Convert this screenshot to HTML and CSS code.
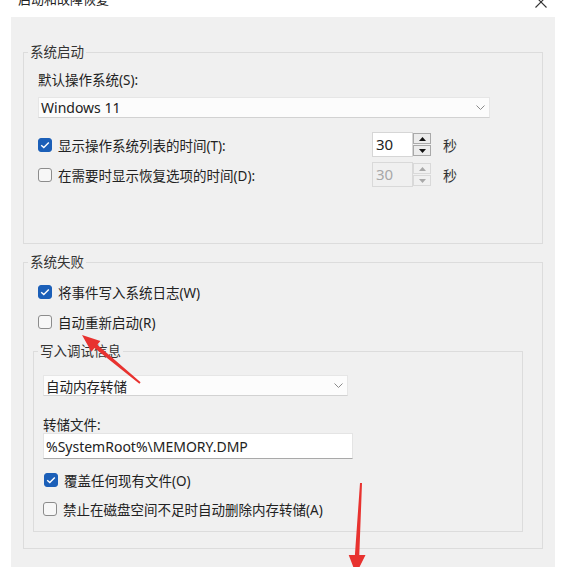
FILE: index.html
```html
<!DOCTYPE html>
<html lang="zh-CN">
<head>
<meta charset="utf-8">
<title>启动和故障恢复</title>
<link rel="stylesheet" href="styles.css">
</head>
<body>
<div class="page">
  <div class="titlebar">
    <span class="title">启动和故障恢复</span>
    <svg class="close" width="12" height="12" viewBox="0 0 12 12"><path d="M0.5 0.5 L11.5 11.5 M11.5 0.5 L0.5 11.5" stroke="#333" stroke-width="1.1" fill="none"/></svg>
  </div>
  <div class="panel">
    <fieldset class="group g1">
      <legend>系统启动</legend>
      <div class="label">默认操作系统(S):</div>
      <div class="select wide">
        <span class="latin">Windows 11</span>
        <svg class="chev" width="9" height="5" viewBox="0 0 9 5"><path d="M0.5 0.5 L4.5 4.5 L8.5 0.5" stroke="#8a8a8a" stroke-width="1" fill="none"/></svg>
      </div>
      <div class="timerow first">
        <div class="check"><span class="box on"><svg width="10" height="8" viewBox="0 0 10 8"><path d="M1.2 4.2 L3.8 6.6 L8.8 1.4" stroke="#fff" stroke-width="1.4" fill="none"/></svg></span><span>显示操作系统列表的时间(T):</span></div>
        <div class="spin">
          <div class="spin-input">30</div>
          <div class="spin-btns">
            <div class="sb"><svg width="7" height="4" viewBox="0 0 7 4"><path d="M0 4 L3.5 0 L7 4Z" fill="#111"/></svg></div>
            <div class="sb"><svg width="7" height="4" viewBox="0 0 7 4"><path d="M0 0 L3.5 4 L7 0Z" fill="#111"/></svg></div>
          </div>
        </div>
        <span class="unit">秒</span>
      </div>
      <div class="timerow">
        <div class="check"><span class="box"></span><span>在需要时显示恢复选项的时间(D):</span></div>
        <div class="spin disabled">
          <div class="spin-input">30</div>
          <div class="spin-btns">
            <div class="sb"><svg width="7" height="4" viewBox="0 0 7 4"><path d="M0 4 L3.5 0 L7 4Z" fill="#a8a8a8"/></svg></div>
            <div class="sb"><svg width="7" height="4" viewBox="0 0 7 4"><path d="M0 0 L3.5 4 L7 0Z" fill="#a8a8a8"/></svg></div>
          </div>
        </div>
        <span class="unit">秒</span>
      </div>
    </fieldset>

    <fieldset class="group g2">
      <legend>系统失败</legend>
      <div class="check row r-first"><span class="box on"><svg width="10" height="8" viewBox="0 0 10 8"><path d="M1.2 4.2 L3.8 6.6 L8.8 1.4" stroke="#fff" stroke-width="1.4" fill="none"/></svg></span><span>将事件写入系统日志(W)</span></div>
      <div class="check row r-second"><span class="box"></span><span>自动重新启动(R)</span></div>

      <fieldset class="group g3">
        <legend>写入调试信息</legend>
        <div class="select narrow">
          <span>自动内存转储</span>
          <svg class="chev" width="9" height="5" viewBox="0 0 9 5"><path d="M0.5 0.5 L4.5 4.5 L8.5 0.5" stroke="#8a8a8a" stroke-width="1" fill="none"/></svg>
        </div>
        <div class="label file-label">转储文件:</div>
        <div class="text-input latin">%SystemRoot%\MEMORY.DMP</div>
        <div class="check row r-over"><span class="box on"><svg width="10" height="8" viewBox="0 0 10 8"><path d="M1.2 4.2 L3.8 6.6 L8.8 1.4" stroke="#fff" stroke-width="1.4" fill="none"/></svg></span><span>覆盖任何现有文件(O)</span></div>
        <div class="check row r-disable"><span class="box"></span><span>禁止在磁盘空间不足时自动删除内存转储(A)</span></div>
      </fieldset>
    </fieldset>
  </div>

  <svg class="arrows" width="563" height="567" viewBox="0 0 563 567">
    <polygon fill="#e8322f" points="82,335 100.4,341 97.3,344.7 140.6,382.2 139.4,383.8 94.5,348.1 91.4,351.8"/>
    <polygon fill="#e8322f" points="356,574 365.5,555 359.3,555 362,483 360,483 354.9,555 348.7,555"/>
  </svg>
</div>
</body>
</html>
```

FILE: styles.css
```css
html, body {
  margin: 0;
  padding: 0;
  background: #ffffff;
}

body {
  font-family: "Noto Sans", "Noto Sans CJK SC", sans-serif;
  font-size: 13.5px;
  color: #222;
}

.page {
  position: relative;
  width: 563px;
  height: 567px;
  overflow: hidden;
}

.titlebar {
  height: 17px;
  display: flex;
  align-items: flex-start;
  padding-left: 18px;
}

.title {
  font-size: 13px;
  line-height: 14px;
  margin-top: -8px;
  color: #222;
}

.close {
  margin-left: auto;
  margin-right: 16px;
  margin-top: -4px;
}

.panel {
  margin-left: 11px;
  width: 544px;
  height: 550px;
  box-sizing: border-box;
  background: #f0f0f0;
  padding: 26px 12px 0 12px;
}

.group {
  margin: 0;
  border: 1px solid #dcdcdc;
  min-width: 0;
}

.group > legend {
  padding: 0 2px;
  line-height: 18px;
  font-size: 13.5px;
  color: #333;
}

.g1 {
  padding: 10px 14px 56px 14px;
}

.g1 > legend {
  margin-left: -10px;
}

.label {
  line-height: 18px;
}

.select {
  height: 21px;
  box-sizing: border-box;
  background: #fcfcfc;
  border: 1px solid #e6e6e6;
  border-bottom-color: #d2d2d2;
  display: flex;
  align-items: center;
  justify-content: space-between;
  padding: 0 4px 0 2px;
}

.select.wide {
  width: 452px;
  margin-top: 8px;
  font-size: 14px;
}

.latin {
  font-size: 14px;
}

.timerow {
  display: grid;
  grid-template-columns: 322px 59px auto;
  column-gap: 12px;
  align-items: center;
  height: 25px;
  margin-top: 5px;
}

.timerow.first {
  margin-top: 14px;
}

.check {
  display: flex;
  align-items: center;
  gap: 6px;
  white-space: nowrap;
}

.box {
  width: 14px;
  height: 14px;
  box-sizing: border-box;
  border: 1px solid #8c8c8c;
  border-radius: 3px;
  background: #f7f7f7;
  display: flex;
  align-items: center;
  justify-content: center;
  flex: none;
}

.box.on {
  background: #1b5fb8;
  border-color: #1b5fb8;
}

.spin {
  display: flex;
  height: 25px;
}

.spin-input {
  width: 41px;
  box-sizing: border-box;
  background: #fff;
  border: 1px solid #d6d6d6;
  padding-left: 3px;
  font-size: 15px;
  line-height: 23px;
  color: #222;
}

.spin-btns {
  width: 18px;
  display: flex;
  flex-direction: column;
  gap: 1px;
  padding: 1px 0;
  box-sizing: border-box;
}

.sb {
  flex: 1;
  border: 1px solid #a9a9a9;
  background: #ececec;
  display: flex;
  align-items: center;
  justify-content: center;
}

.spin.disabled .spin-input {
  background: #f0f0f0;
  border-color: #d9d9d9;
  color: #a8a8a8;
}

.spin.disabled .sb {
  border-color: #d9d9d9;
  background: #f0f0f0;
}

.unit {
  font-size: 14px;
  color: #333;
}

.g2 {
  margin-top: 9px;
  padding: 11px 19px 16px 9px;
}

.g2 > legend {
  margin-left: -5px;
}

.row {
  height: 20px;
}

.r-first {
  margin-left: 5px;
}

.r-second {
  margin-left: 5px;
  margin-top: 10px;
}

.g3 {
  margin-top: 10px;
  padding: 15px 12px 12px 9px;
}

.g3 > legend {
  margin-left: -5px;
}

.select.narrow {
  width: 305px;
}

.file-label {
  margin-top: 21px;
  line-height: 16px;
}

.text-input {
  width: 310px;
  height: 26px;
  box-sizing: border-box;
  background: #fff;
  border: 1px solid #e4e4e4;
  border-bottom-color: #a9a9a9;
  padding-left: 2px;
  display: flex;
  align-items: center;
  color: #222;
}

.r-over {
  margin-top: 11px;
  margin-left: 1px;
}

.r-disable {
  margin-top: 9px;
}

.arrows {
  position: absolute;
  left: 0;
  top: 0;
  pointer-events: none;
}
```
